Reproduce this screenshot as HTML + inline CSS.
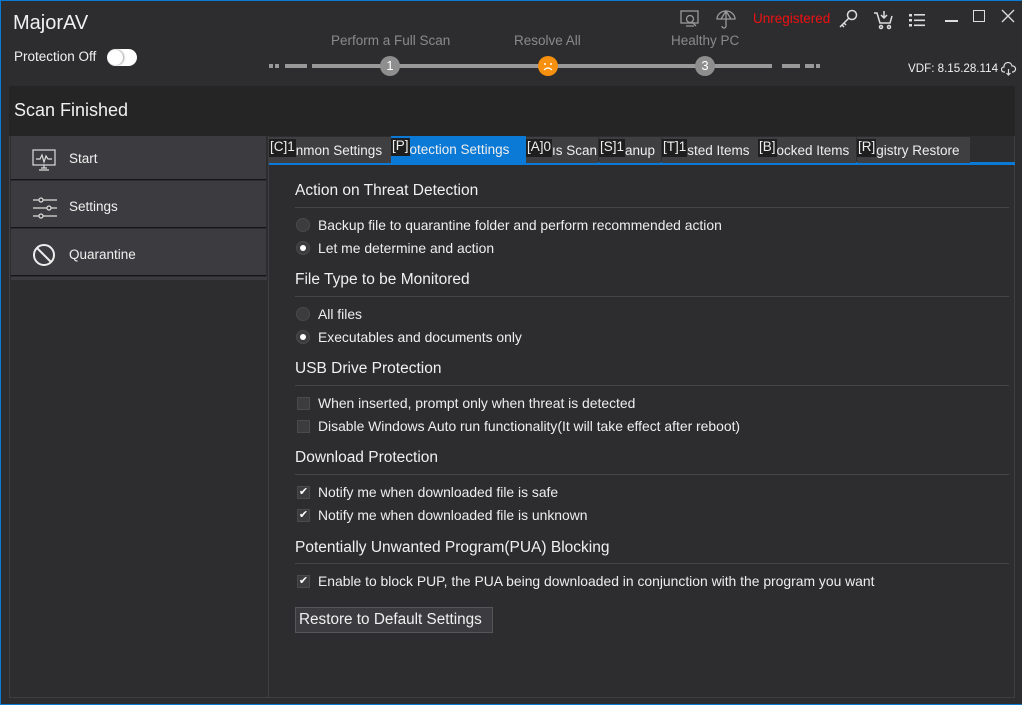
<!DOCTYPE html>
<html><head><meta charset="utf-8"><style>
*{box-sizing:border-box;margin:0;padding:0}
body{width:1022px;height:705px;background:#2d2d30;font-family:"Liberation Sans",sans-serif;color:#f0f0f0;position:relative;overflow:hidden;border:1px solid #0a7ad6;border-right:none}
.abs{position:absolute}
.t{font-size:13px;color:#f0f0f0;white-space:nowrap}
.g{color:#8a8a8a;font-size:13.5px}
.tab{position:absolute;top:136px;height:26px;background:#3f3f42;font-size:13.5px;line-height:28px;white-space:nowrap;overflow:hidden;color:#eee}
.tab b{font-weight:normal;background:#1e1e1e;display:inline-block;height:18px;line-height:16px;vertical-align:top;margin-top:2px;padding:0 1px}
.h{position:absolute;left:294px;font-size:15.5px;color:#f0f0f0}
.hl{position:absolute;left:294px;width:714px;height:1px;background:#454548}
.r{position:absolute;left:295px;width:14px;height:14px;border-radius:50%;background:#3c3c3f;border:1px solid #4a4a4d}
.r.on::after{content:"";position:absolute;left:3px;top:3px;width:6px;height:6px;border-radius:50%;background:#fff}
.c{position:absolute;left:296px;width:13px;height:13px;background:#3c3c3f;border:1px solid #4a4a4d;font-size:11px;line-height:11px;text-align:center;color:#fff}
.l{position:absolute;left:317px;font-size:13.9px;color:#eee;white-space:nowrap}
.side{position:absolute;left:10px;width:255px;height:44px;background:#3c3c40;border-bottom:1px solid #151515}
.side span{position:absolute;left:58px;top:15px;font-size:13.5px}
</style></head><body>
<div class="abs" style="left:12px;top:11px;font-size:20px">MajorAV</div>
<div class="abs t" style="left:13px;top:48px;font-size:13.5px">Protection Off</div>
<div class="abs" style="left:106px;top:48px;width:30px;height:17px;border-radius:9px;background:#fff"><div style="position:absolute;left:1px;top:1px;width:15px;height:15px;border-radius:50%;background:#fff;box-shadow:1px 0 2px #999"></div></div>
<div class="abs g" style="left:330px;top:32px">Perform a Full Scan</div>
<div class="abs g" style="left:513px;top:32px">Resolve All</div>
<div class="abs g" style="left:670px;top:32px">Healthy PC</div>
<div class="abs" style="left:268px;top:63px;width:4px;height:4px;background:#999"></div>
<div class="abs" style="left:274px;top:63px;width:4px;height:4px;background:#999"></div>
<div class="abs" style="left:284px;top:63px;width:22px;height:4px;background:#999"></div>
<div class="abs" style="left:311px;top:63px;width:460px;height:4px;background:#999"></div>
<div class="abs" style="left:781px;top:63px;width:18px;height:4px;background:#999"></div>
<div class="abs" style="left:804px;top:63px;width:9px;height:4px;background:#999"></div>
<div class="abs" style="left:815px;top:63px;width:4px;height:4px;background:#999"></div>
<div class="abs" style="left:379px;top:55px;width:20px;height:20px;border-radius:50%;background:#8e8e8e;color:#fff;font-size:13px;text-align:center;line-height:20px">1</div>
<svg class="abs" style="left:537px;top:55px" width="20" height="20"><circle cx="10" cy="10" r="10" fill="#f7900f"/><circle cx="7" cy="8" r="1" fill="#fff"/><circle cx="13" cy="8" r="1" fill="#fff"/><path d="M6 14q4-4 8 0" stroke="#fff" stroke-width="1.2" fill="none"/></svg>
<div class="abs" style="left:694px;top:55px;width:20px;height:20px;border-radius:50%;background:#8e8e8e;color:#fff;font-size:13px;text-align:center;line-height:20px">3</div>
<svg class="abs" style="left:678px;top:8px" width="24" height="20" fill="none" stroke="#999" stroke-width="1.3"><rect x="2" y="2" width="17" height="12"/><circle cx="11" cy="10" r="3.5"/><path d="M13 13l4 4M7 17h8"/></svg>
<svg class="abs" style="left:714px;top:8px" width="22" height="20" fill="none" stroke="#999" stroke-width="1.3"><path d="M2 10a9 8 0 0 1 18 0zM11 2v15a2 2 0 0 1-4 0M6 10l5-8 5 8"/></svg>
<div class="abs" style="left:752px;top:10px;color:#f01010;font-size:13.5px">Unregistered</div>
<svg class="abs" style="left:836px;top:7px" width="22" height="22" fill="none" stroke="#ddd" stroke-width="1.5"><circle cx="15" cy="7" r="4.5"/><path d="M12 10L3 19M5 17l2 2M7 15l2 2"/></svg>
<svg class="abs" style="left:872px;top:8px" width="22" height="22" fill="none" stroke="#ddd" stroke-width="1.5"><path d="M1 4h3l3 10h10l2-7M11 2v7M8 6l3 3 3-3"/><circle cx="8" cy="18" r="1.5"/><circle cx="16" cy="18" r="1.5"/></svg>
<svg class="abs" style="left:907px;top:11px" width="20" height="16" fill="#ddd"><rect x="1" y="2" width="3" height="2.5"/><rect x="6" y="2" width="11" height="1.6"/><rect x="1" y="7" width="3" height="2.5"/><rect x="6" y="7.5" width="11" height="1.6"/><rect x="1" y="12" width="3" height="2.5"/><rect x="6" y="12.5" width="11" height="1.6"/></svg>
<div class="abs" style="left:944px;top:19px;width:13px;height:1.5px;background:#ddd"></div>
<div class="abs" style="left:972px;top:9px;width:12px;height:12px;border:1.5px solid #ddd"></div>
<svg class="abs" style="left:999px;top:7px" width="16" height="16" stroke="#ddd" stroke-width="1.3"><path d="M2 2l12 12M14 2L2 14"/></svg>
<div class="abs t" style="left:907px;top:61px;font-size:11.6px">VDF: 8.15.28.114</div>
<svg class="abs" style="left:1000px;top:61px" width="16" height="14" fill="none" stroke="#ddd" stroke-width="1.2"><path d="M4 10H3a2.5 2.5 0 0 1 0-5 4 4 0 0 1 8-1 3 3 0 0 1 1 6h-1M7.5 7v6M5.5 11l2 2 2-2"/></svg>

<div class="abs" style="left:8px;top:85px;width:1006px;height:612px;border:1px solid #3f3f42"></div>
<div class="abs" style="left:8px;top:85px;width:1006px;height:50px;background:#252526"></div>
<div class="abs" style="left:13px;top:99px;font-size:18px">Scan Finished</div>
<div class="abs" style="left:267px;top:135px;width:1px;height:562px;background:#3f3f42"></div>
<div class="abs" style="left:10px;top:276px;width:256px;height:3px;background:#3c3c40"></div>
<div class="side" style="top:135px"><svg class="abs" style="left:21px;top:13px" width="26" height="24" fill="none" stroke="#ddd" stroke-width="1.2"><rect x="1" y="1" width="22" height="15"/><path d="M4 10h4l2-4 2 7 2-6 2 3h4M12 16v3M7 21h10M9 19h6"/></svg><span>Start</span></div>
<div class="side" style="top:180px;height:47px;padding-top:3px"><svg class="abs" style="left:21px;top:15px" width="26" height="24" fill="none" stroke="#ddd" stroke-width="1.2"><path d="M1 4h24M1 12h24M1 20h24"/><circle cx="9" cy="4" r="2" fill="#3c3c40"/><circle cx="17" cy="12" r="2" fill="#3c3c40"/><circle cx="9" cy="20" r="2" fill="#3c3c40"/></svg><span style="top:18px">Settings</span></div>
<div class="side" style="top:228px;height:47px"><svg class="abs" style="left:21px;top:14px" width="24" height="24" fill="none" stroke="#eee" stroke-width="2"><circle cx="12" cy="12" r="10"/><path d="M5 5l14 14"/></svg><span style="top:18px">Quarantine</span></div>

<div class="abs" style="left:268px;top:161px;width:746px;height:3px;background:#0a7ad6"></div>
<div class="tab" style="left:268px;width:122px"><b>[C]1</b>nmon Settings</div>
<div class="tab" style="left:390px;width:135px;background:#0a7ad6;top:135px;height:27px"><b>[P]</b>otection Settings</div>
<div class="tab" style="left:525px;width:72px"><b>[A]0</b>ıs Scan</div>
<div class="tab" style="left:598px;width:62px"><b>[S]1</b>anup</div>
<div class="tab" style="left:661px;width:96px"><b>[T]1</b>sted Items</div>
<div class="tab" style="left:757px;width:98px"><b>[B]</b>ocked Items</div>
<div class="tab" style="left:856px;width:113px"><b>[R]</b>gistry Restore</div>

<div class="h" style="top:181px">Action on Threat Detection</div><div class="hl" style="top:206px"></div>
<div class="r" style="top:217px"></div><div class="l" style="top:216px">Backup file to quarantine folder and perform recommended action</div>
<div class="r on" style="top:240px"></div><div class="l" style="top:239px">Let me determine and action</div>
<div class="h" style="top:270px">File Type to be Monitored</div><div class="hl" style="top:295px"></div>
<div class="r" style="top:306px"></div><div class="l" style="top:305px">All files</div>
<div class="r on" style="top:329px"></div><div class="l" style="top:328px">Executables and documents only</div>
<div class="h" style="top:359px">USB Drive Protection</div><div class="hl" style="top:384px"></div>
<div class="c" style="top:396px"></div><div class="l" style="top:394px">When inserted, prompt only when threat is detected</div>
<div class="c" style="top:419px"></div><div class="l" style="top:417px">Disable Windows Auto run functionality(It will take effect after reboot)</div>
<div class="h" style="top:448px">Download Protection</div><div class="hl" style="top:473px"></div>
<div class="c" style="top:485px">✔</div><div class="l" style="top:483px">Notify me when downloaded file is safe</div>
<div class="c" style="top:508px">✔</div><div class="l" style="top:506px">Notify me when downloaded file is unknown</div>
<div class="h" style="top:538px">Potentially Unwanted Program(PUA) Blocking</div><div class="hl" style="top:562px"></div>
<div class="c" style="top:574px">✔</div><div class="l" style="top:572px">Enable to block PUP, the PUA being downloaded in conjunction with the program you want</div>
<div class="abs" style="left:294px;top:606px;width:198px;height:26px;background:#3c3c40;border:1px solid #55555a;font-size:15.3px;line-height:24px;padding-left:3px;color:#f0f0f0;white-space:nowrap">Restore to Default Settings</div>
</body></html>
